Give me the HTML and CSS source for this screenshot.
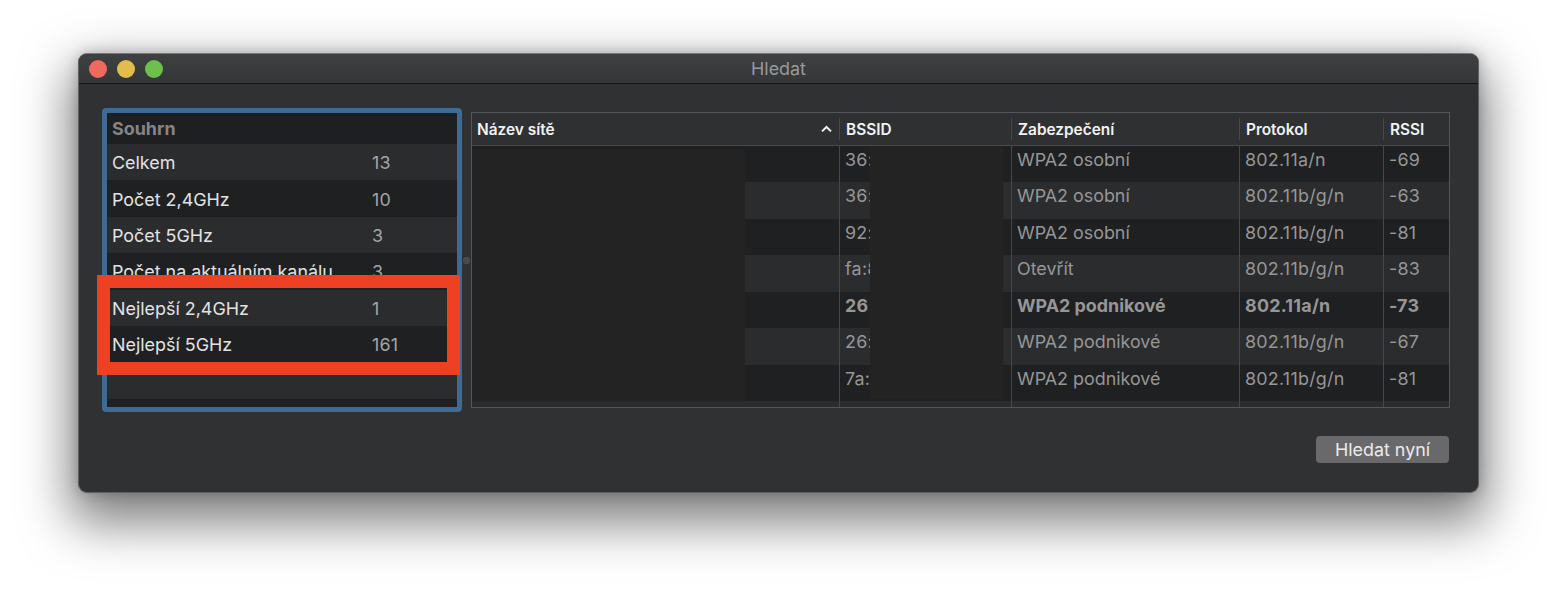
FILE: index.html
```html
<!DOCTYPE html>
<html lang="cs">
<head>
<meta charset="utf-8">
<title>Hledat</title>
<link rel="stylesheet" href="styles.css">
</head>
<body>
<main class="window">
  <header class="titlebar">
    <div class="lights"><span class="light red"></span><span class="light yellow"></span><span class="light green"></span></div>
    <div class="title">Hledat</div>
  </header>
  <div class="content">
    <div class="panes">
      <section class="summary">
        <div class="sum-row sum-head"><span>Souhrn</span></div>
        <div class="sum-row light-row"><span>Celkem</span><span class="val">13</span></div>
        <div class="sum-row dark-row"><span>Počet 2,4GHz</span><span class="val">10</span></div>
        <div class="sum-row light-row"><span>Počet 5GHz</span><span class="val">3</span></div>
        <div class="sum-row dark-row"><span>Počet na aktuálním kanálu</span><span class="val">3</span></div>
        <div class="sum-row light-row"><span>Nejlepší 2,4GHz</span><span class="val">1</span></div>
        <div class="sum-row dark-row"><span>Nejlepší 5GHz</span><span class="val">161</span></div>
        <div class="sum-row light-row"></div>
        <div class="sum-row dark-row"></div>
      </section>
      <div class="grip"></div>
      <section class="table">
        <div class="t-row t-head">
          <div class="cell first name-head"><span>Název sítě</span>
            <svg class="sort" width="11" height="8" viewBox="0 0 11 8"><path d="M1 6.4 5.5 2l4.5 4.4" fill="none" stroke="#f0f0f0" stroke-width="2"/></svg>
          </div>
          <div class="cell">BSSID</div><div class="cell">Zabezpečení</div><div class="cell">Protokol</div><div class="cell">RSSI</div>
        </div>
        <div class="t-body">
          <div class="t-row dark-row"><div class="cell first"></div><div class="cell num">36:</div><div class="cell">WPA2 osobní</div><div class="cell num">802.11a/n</div><div class="cell num">-69</div></div>
          <div class="t-row light-row"><div class="cell first"></div><div class="cell num">36:</div><div class="cell">WPA2 osobní</div><div class="cell num">802.11b/g/n</div><div class="cell num">-63</div></div>
          <div class="t-row dark-row"><div class="cell first"></div><div class="cell num">92:</div><div class="cell">WPA2 osobní</div><div class="cell num">802.11b/g/n</div><div class="cell num">-81</div></div>
          <div class="t-row light-row"><div class="cell first"></div><div class="cell num">fa:8</div><div class="cell">Otevřít</div><div class="cell num">802.11b/g/n</div><div class="cell num">-83</div></div>
          <div class="t-row dark-row current"><div class="cell first"></div><div class="cell num">26:</div><div class="cell">WPA2 podnikové</div><div class="cell num">802.11a/n</div><div class="cell num">-73</div></div>
          <div class="t-row light-row"><div class="cell first"></div><div class="cell num">26:</div><div class="cell">WPA2 podnikové</div><div class="cell num">802.11b/g/n</div><div class="cell num">-67</div></div>
          <div class="t-row dark-row"><div class="cell first"></div><div class="cell num">7a:</div><div class="cell">WPA2 podnikové</div><div class="cell num">802.11b/g/n</div><div class="cell num">-81</div></div>
          <div class="t-row light-row"><div class="cell first"></div><div class="cell"></div><div class="cell"></div><div class="cell"></div><div class="cell"></div></div>
        </div>
        <div class="redact redact-name"></div>
        <div class="redact redact-bssid"></div>
      </section>
    </div>
    <div class="actions"><button class="scan" type="button">Hledat nyní</button></div>
  </div>
  <div class="highlight"></div>
</main>
</body>
</html>
```
FILE: styles.css
```css
* { box-sizing: border-box; }
html, body { margin: 0; height: 100%; }
body {
  background: #fff;
  padding: 53px 78px 0;
  overflow: hidden;
  font-family: Inter, "Liberation Sans", sans-serif;
  font-size: 17.9px;
}
.window {
  position: relative;
  width: 1401px;
  height: 440px;
  background: #303133;
  border: 1px solid #606163;
  border-top-color: #77787a;
  border-radius: 9px;
  box-shadow: 0 22px 50px 8px rgba(0,0,0,.5), 0 0 14px rgba(0,0,0,.22);
}
.titlebar {
  position: relative;
  height: 30px;
  display: flex;
  align-items: center;
  justify-content: center;
  background: linear-gradient(#3f4042, #353638);
  border-bottom: 1px solid #151515;
  border-radius: 8px 8px 0 0;
}
.lights { position: absolute; left: 10px; top: 6px; display: flex; gap: 10px; }
.light { width: 18px; height: 18px; border-radius: 50%; }
.red { background: #ee6a5f; }
.yellow { background: #e3bd4b; }
.green { background: #6cc04b; }
.title { color: #98999b; font-size: 17.9px; }
.content { padding: 24px 28px 0 23px; }
.panes { display: flex; align-items: flex-start; }
.summary {
  width: 360px;
  height: 304px;
  overflow: hidden;
  border: 5px solid #3f6a94;
  border-radius: 4px;
  background: #1f2022;
}
.sum-row {
  height: 36.4px;
  display: flex;
  align-items: center;
  padding: 1px 0 0 5px;
  color: #e2e2e2;
}
.sum-row > span:first-child { flex: 0 0 260px; white-space: nowrap; }
.sum-head { height: 31px; padding-top: 0; background: #1e1f21; color: #858585; font-weight: 700; }
.val { color: #a4a4a4; letter-spacing: .2px; }
.light-row { background: #2b2c2e; }
.dark-row { background: #1f2022; }
.grip {
  width: 9px;
  align-self: center;
  height: 9px;
  flex: none;
  background: radial-gradient(circle, #4a4b4d 0 3.5px, transparent 4px);
}
.table {
  position: relative;
  width: 979px;
  height: 296px;
  margin-top: 4px;
  overflow: hidden;
  border: 1px solid #55565a;
  background: #2b2c2e;
}
.t-row {
  display: grid;
  grid-template-columns: 367px 172px 228px 144px 1fr;
  height: 36.45px;
  color: #969696;
}
.t-row .cell { border-left: 1px solid #47484b; padding: 3px 5px 0; height: 100%; white-space: nowrap; }
.t-row .cell.first { border-left: 0; }
.t-row .cell.num { letter-spacing: .25px; }
.t-head {
  height: 33px;
  background: #2f3032;
  border-bottom: 1px solid #48494c;
  color: #f2f2f2;
  font-weight: 600;
  font-size: 15.4px;
  align-items: center;
}
.t-head .cell { height: 22px; padding: 0 6px; display: flex; align-items: center; }
.t-row .name-head { justify-content: space-between; padding: 0 7px 0 5px; }
.sort { flex: none; }
.current { font-weight: 700; }
.redact { position: absolute; background: #232323; }
.redact-name { left: 0; top: 37px; width: 273px; bottom: 6px; }
.redact-bssid { left: 398px; top: 33px; width: 133px; bottom: 8px; }
.actions { display: flex; justify-content: flex-end; padding: 24px 1px 0 0; }
.scan {
  width: 133px;
  height: 27px;
  border: 0;
  border-radius: 4px;
  background: #69696b;
  color: #ebebeb;
  font: inherit;
  padding: 0;
}
.highlight {
  position: absolute;
  left: 18px;
  top: 221px;
  width: 363px;
  height: 100px;
  border: 13px solid #ee4023;
}
```
